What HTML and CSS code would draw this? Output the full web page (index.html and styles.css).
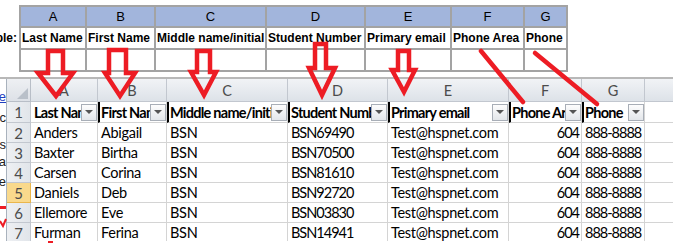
FILE: index.html
```html
<!DOCTYPE html>
<html lang="en">
<head>
    <meta charset="UTF-8">
    <title>Import columns</title>
    <link rel="stylesheet" href="styles.css">
</head>
<body>
    <div class="top">
        <div class="lead"><span>Example:</span></div>
        <div class="guide">
            <div class="gh">A</div><div class="gh">B</div><div class="gh">C</div><div class="gh">D</div>
            <div class="gh">E</div><div class="gh">F</div><div class="gh">G</div>
            <div class="gl">Last Name</div><div class="gl">First Name</div><div class="gl">Middle name/initial</div>
            <div class="gl">Student Number</div><div class="gl">Primary email</div><div class="gl">Phone Area</div>
            <div class="gl">Phone</div>
            <div class="gb"></div><div class="gb"></div><div class="gb"></div><div class="gb"></div>
            <div class="gb"></div><div class="gb"></div><div class="gb"></div>
        </div>
    </div>
    <div class="rule"></div>

    <div class="lower">
        <div class="side">
            <div class="frag f1"><a href="#">here</a></div>
            <div class="frag f2">etc</div>
            <div class="frag f3">this</div>
            <div class="frag f4">data</div>
            <div class="frag f5">name</div>
        </div>

        <div class="sheet">
            <!-- column letters -->
            <div class="corner"><svg width="11" height="11" viewBox="0 0 11 11"><polygon points="11,0 11,11 0,11" fill="#b9c0c9"/></svg></div>
            <div class="ch">A</div><div class="ch">B</div><div class="ch">C</div><div class="ch">D</div>
            <div class="ch">E</div><div class="ch">F</div><div class="ch">G</div><div class="ch"></div>

            <!-- row 1: table header with filter buttons -->
            <div class="rh">1</div>
            <div class="th first"><span>Last Name</span><i class="dd"></i></div>
            <div class="th"><span>First Name</span><i class="dd"></i></div>
            <div class="th"><span>Middle name/initial</span><i class="dd"></i></div>
            <div class="th"><span>Student Number</span><i class="dd"></i></div>
            <div class="th"><span>Primary email</span><i class="dd"></i></div>
            <div class="th"><span>Phone Area</span><i class="dd"></i></div>
            <div class="th"><span>Phone</span><i class="dd"></i></div>
            <div class="td"></div>

            <div class="rh">2</div><div class="td">Anders</div><div class="td">Abigail</div><div class="td">BSN</div>
            <div class="td code">BSN69490</div><div class="td">Test@hspnet.com</div><div class="td num">604</div><div class="td code">888-8888</div><div class="td"></div>

            <div class="rh">3</div><div class="td">Baxter</div><div class="td">Birtha</div><div class="td">BSN</div>
            <div class="td code">BSN70500</div><div class="td">Test@hspnet.com</div><div class="td num">604</div><div class="td code">888-8888</div><div class="td"></div>

            <div class="rh">4</div><div class="td">Carsen</div><div class="td">Corina</div><div class="td">BSN</div>
            <div class="td code">BSN81610</div><div class="td">Test@hspnet.com</div><div class="td num">604</div><div class="td code">888-8888</div><div class="td"></div>

            <div class="rh active">5</div><div class="td">Daniels</div><div class="td">Deb</div><div class="td">BSN</div>
            <div class="td code">BSN92720</div><div class="td">Test@hspnet.com</div><div class="td num">604</div><div class="td code">888-8888</div><div class="td"></div>

            <div class="rh">6</div><div class="td">Ellemore</div><div class="td">Eve</div><div class="td">BSN</div>
            <div class="td code">BSN03830</div><div class="td">Test@hspnet.com</div><div class="td num">604</div><div class="td code">888-8888</div><div class="td"></div>

            <div class="rh">7</div><div class="td">Furman</div><div class="td">Ferina</div><div class="td">BSN</div>
            <div class="td code">BSN14941</div><div class="td">Test@hspnet.com</div><div class="td num">604</div><div class="td code">888-8888</div><div class="td"></div>
        </div>
    </div>

    <!-- hand-drawn red markers over the screenshot -->
    <svg class="marks" width="673" height="243" viewBox="0 0 673 243">
        <g fill="none" stroke="#ed1c24" stroke-width="4.5" stroke-linejoin="miter">
            <polygon points="48,51 63,51 63,73 73,73 56,96 38,73 48,73"/>
            <polygon points="109,50 126,50 126,73 135,73 120,96 105,73 109,73"/>
            <polygon points="197,51 210,51 210,72 216,72 204,95 191,72 197,72"/>
            <polygon points="315,44 326,44 326,68 335,68 322,95 309,68 315,68"/>
            <polygon points="398,51 409,51 409,70 415,70 404,92 392,70 398,70"/>
        </g>
        <g stroke="#ed1c24" stroke-width="4.5" stroke-linecap="round">
            <line x1="481" y1="51" x2="523" y2="102"/>
            <line x1="535" y1="53" x2="597" y2="104"/>
        </g>
        <rect x="0" y="206" width="6" height="3" fill="#ed1c24"/>
        <polyline points="0,221 3,226 6,219" fill="none" stroke="#ed1c24" stroke-width="2"/>
        <rect x="48" y="241" width="5" height="2" fill="#ed1c24"/>
    </svg>
</body>
</html>
```

FILE: styles.css
```css
body {
    margin: 0;
    width: 673px;
    height: 243px;
    overflow: hidden;
    position: relative;
    background: #fff;
    font-family: 'Liberation Sans', Arial, sans-serif;
    color: #000;
}

/* ---- column guide at the top ---- */
.top {
    display: flex;
    height: 77px;
    padding-top: 5px;
    box-sizing: border-box;
}
.lead {
    width: 19px;
    overflow: hidden;
    display: flex;
    justify-content: flex-end;
    padding-top: 26px;
    font-size: 12px;
    font-weight: bold;
    white-space: nowrap;
}
.lead span {
    padding-right: 2px;
}
.guide {
    display: grid;
    grid-template-columns: 66px 69px 111px 99px 86px 73px 43px;
    grid-template-rows: 21px 22px 22px;
    border-top: 2px solid #a3a3a3;
    border-left: 2px solid #a3a3a3;
    align-self: flex-start;
}
.guide > div {
    border-right: 2px solid #a3a3a3;
    border-bottom: 2px solid #a3a3a3;
    box-sizing: border-box;
    display: flex;
    align-items: center;
    white-space: nowrap;
    overflow: hidden;
}
.gh {
    background-color: #a2b5dc;
    justify-content: center;
    font-size: 13px;
}
.gl {
    font-size: 12px;
    font-weight: bold;
    padding-left: 1px;
}
.rule {
    height: 2px;
    background-color: #b8b8b8;
}

/* ---- spreadsheet part ---- */
.lower {
    display: flex;
    height: 162px;
    overflow: hidden;
}
.side {
    width: 6px;
    flex-shrink: 0;
    overflow: hidden;
    display: flex;
    flex-direction: column;
    align-items: flex-end;
    font-size: 13px;
    color: #222;
}
.frag {
    height: 16px;
    line-height: 16px;
    white-space: nowrap;
    display: flex;
    justify-content: flex-end;
}
.frag a {
    color: #1f3fbf;
}
.f1 { margin-top: 10px; }
.f2 { margin-top: 5px; }
.f3 { margin-top: 11px; }
.f4 { margin-top: 1px; }
.f5 { margin-top: 4px; }

.sheet {
    display: grid;
    grid-template-columns: 24px 67px 69px 121px 100px 121px 73px 63px 40px;
    grid-template-rows: 23px 21px repeat(6, 20px);
    border-left: 1px solid #a9b2bd;
    font-family: 'Lato', 'Open Sans', sans-serif;
    font-size: 14.5px;
    letter-spacing: -0.3px;
}
.sheet > div {
    box-sizing: border-box;
    border-right: 1px solid #d4d4d4;
    border-bottom: 1px solid #d4d4d4;
    display: flex;
    align-items: center;
    white-space: nowrap;
    overflow: hidden;
}
.corner {
    background: linear-gradient(#eef0f3, #dde1e7);
    justify-content: flex-end;
    align-items: flex-end !important;
    padding: 0 2px 2px 0;
    border-color: #b8bec7 !important;
}
.ch {
    background: linear-gradient(#f1f3f6, #dde2e8);
    border-color: #c2c7cf !important;
    justify-content: center;
    color: #4c4c4c;
    letter-spacing: 0;
}
.rh {
    background: linear-gradient(90deg, #eef0f3, #e1e5ea);
    border-color: #c2c7cf !important;
    justify-content: center;
    color: #4c4c4c;
    font-size: 15px;
    letter-spacing: 0;
}
.rh.active {
    background: #f9d98c;
    border-bottom-color: #eab64c !important;
    border-right-color: #eab64c !important;
}
.th {
    font-weight: bold;
    border-left: 2px solid #000;
    padding-left: 1px;
    letter-spacing: -0.75px;
}
.th.first {
    border-left: none;
    padding-left: 3px;
}
.th span {
    flex: 1;
    overflow: hidden;
}
.dd {
    width: 16px;
    height: 17px;
    flex-shrink: 0;
    box-sizing: border-box;
    border: 1px solid #a8aeb7;
    background: linear-gradient(#fdfdfd, #e3e6ea);
    display: flex;
    align-items: center;
    justify-content: center;
}
.dd::after {
    content: "";
    border-left: 4px solid transparent;
    border-right: 4px solid transparent;
    border-top: 4px solid #555;
}
.td {
    padding-left: 3px;
}
.td.code {
    letter-spacing: -1px;
}
.td.num {
    justify-content: flex-end;
    padding-right: 2px;
    letter-spacing: -1px;
}

/* red annotations drawn over everything */
.marks {
    position: absolute;
    top: 0;
    left: 0;
    pointer-events: none;
}
```
